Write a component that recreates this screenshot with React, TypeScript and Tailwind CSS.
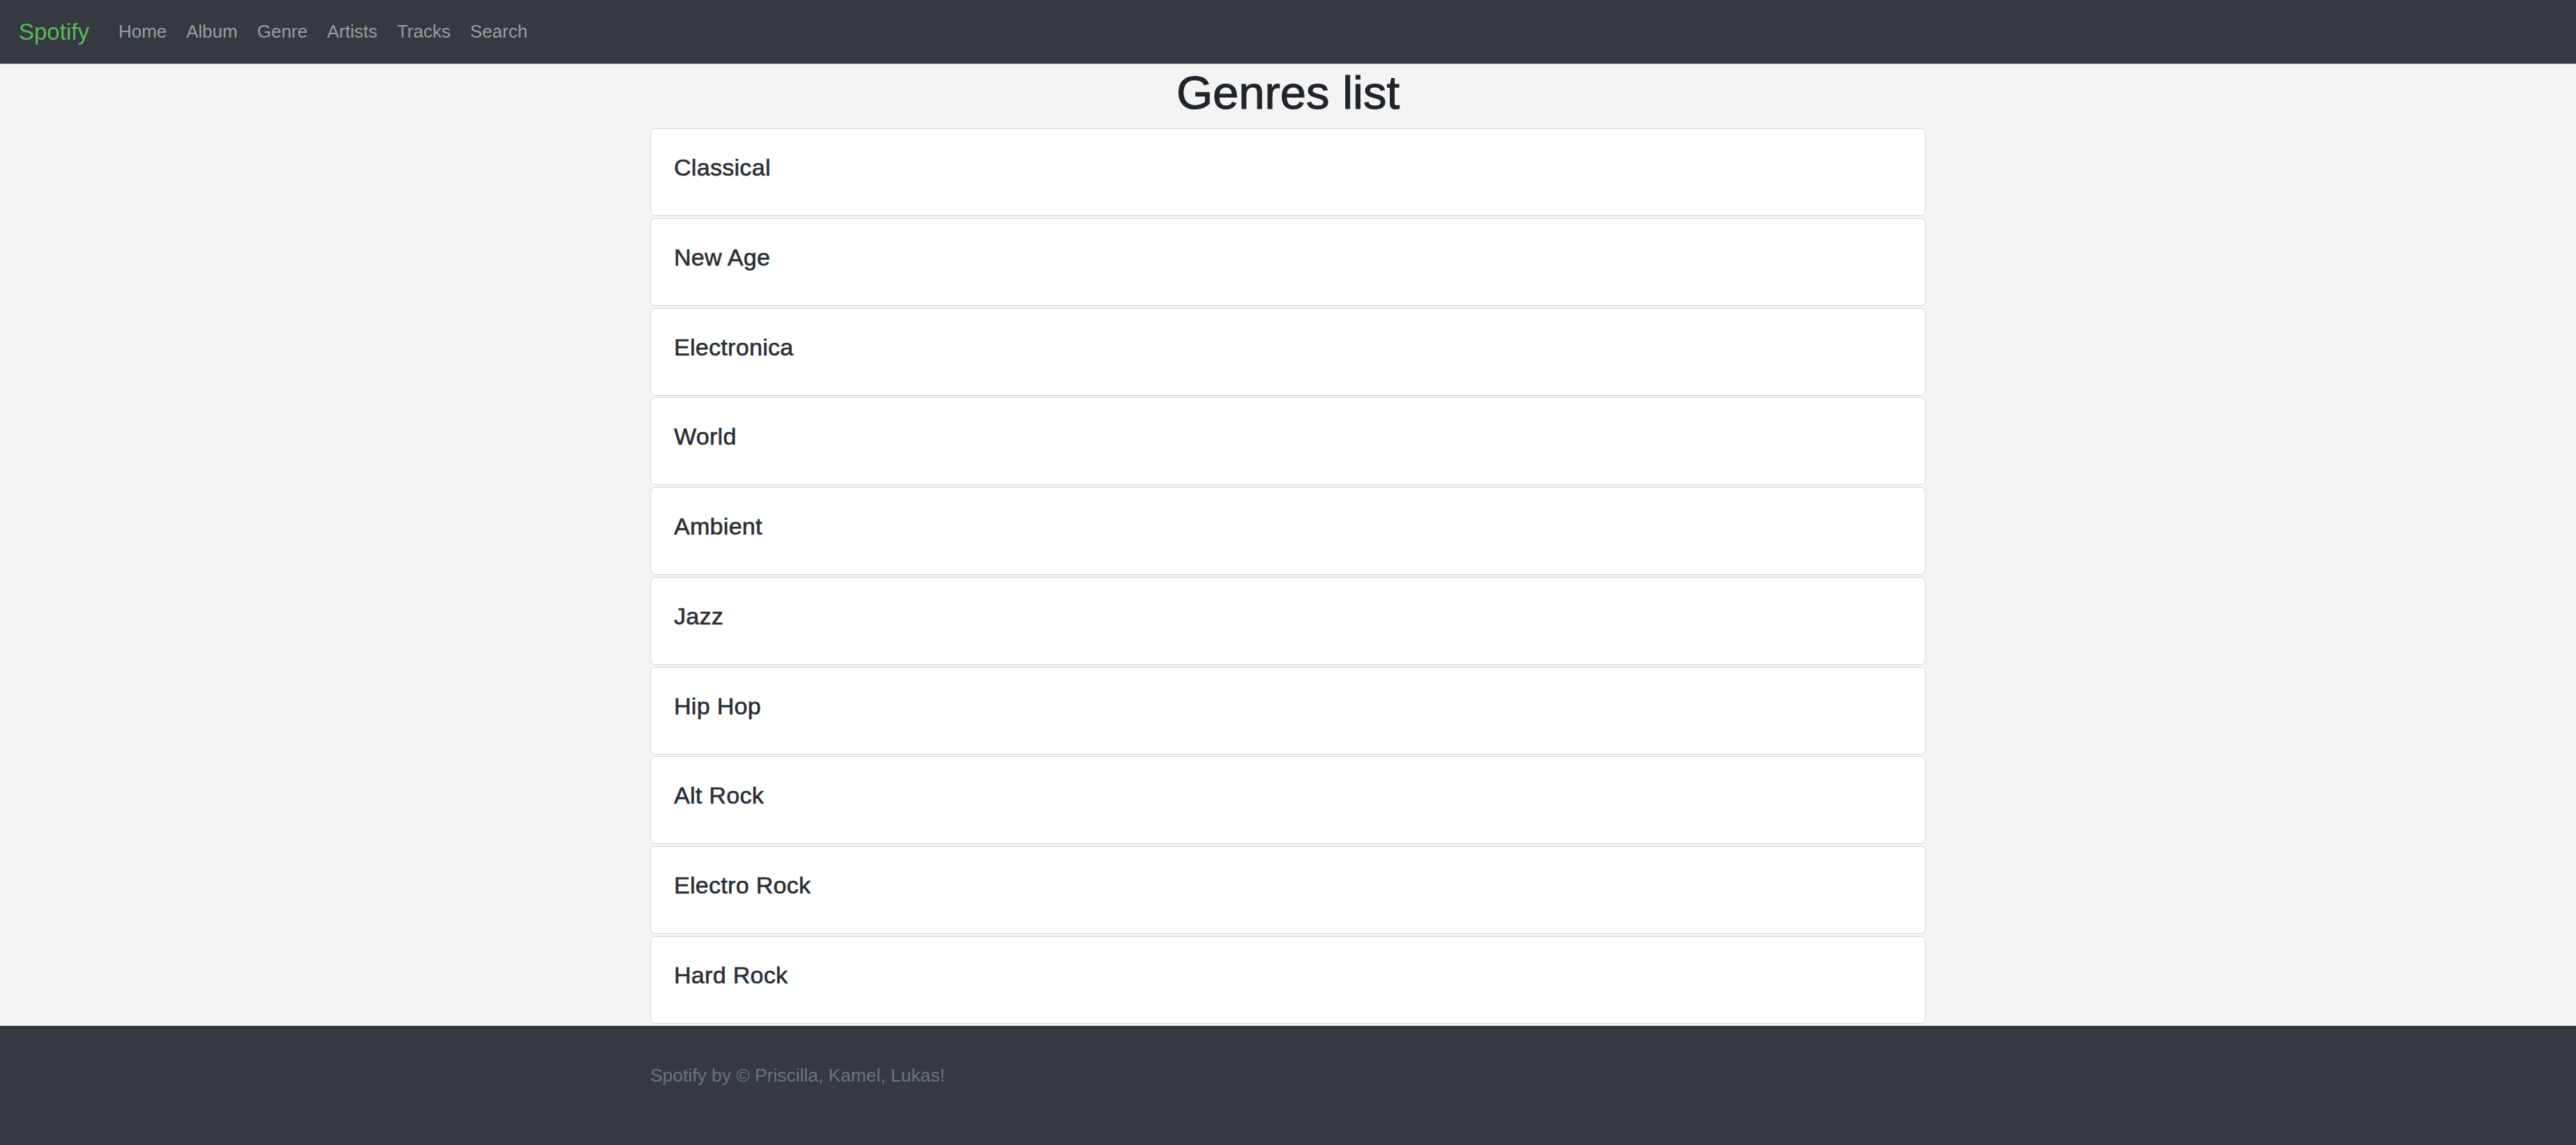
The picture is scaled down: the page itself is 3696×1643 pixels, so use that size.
import React from "react";

const genres = [
  "Classical",
  "New Age",
  "Electronica",
  "World",
  "Ambient",
  "Jazz",
  "Hip Hop",
  "Alt Rock",
  "Electro Rock",
  "Hard Rock",
];

const links = ["Home", "Album", "Genre", "Artists", "Tracks", "Search"];

export default function App() {
  return (
    <div
      className="min-h-screen flex flex-col bg-[#f4f4f4] text-[#212529]"
      style={{ fontFamily: '"Liberation Sans", Arial, Helvetica, sans-serif' }}
    >
      <nav className="h-[92px] flex items-center px-[27px] bg-[#343a40] border-b border-[#8d9094]">
        <a className="text-[33px] leading-[1.5] text-[#5cb85c]">Spotify</a>
        <ul className="flex ml-[28px]">
          {links.map((l) => (
            <li key={l}>
              <a className="block px-[14px] text-[26px] leading-[1.5] text-[#9a9da1]">{l}</a>
            </li>
          ))}
        </ul>
      </nav>
      <main className="flex-1">
        <h1 className="text-center text-[67px] leading-[1.2] font-medium pt-[1px] mb-[11px] text-[#212529] [-webkit-text-stroke:1.1px_#212529]">
          Genres list
        </h1>
        <div className="w-[1830px] mx-auto flex flex-col gap-[2.7px]">
          {genres.map((g) => (
            <div
              key={g}
              className="h-[126px] bg-white border border-[#d6d6d6] rounded-[7px] px-[33px] pt-[35px]"
            >
              <h5 className="text-[34px] leading-[1.2] tracking-[0.3px] font-medium text-[#2a2e33] [-webkit-text-stroke:0.6px_#2a2e33]">
                {g}
              </h5>
            </div>
          ))}
        </div>
      </main>
      <footer className="h-[171px] bg-[#343a40] pt-[52px]">
        <div className="w-[1830px] mx-auto">
          <span className="text-[26.4px] leading-[1.5] text-[#6c737b]">
            Spotify by © Priscilla, Kamel, Lukas!
          </span>
        </div>
      </footer>
    </div>
  );
}
